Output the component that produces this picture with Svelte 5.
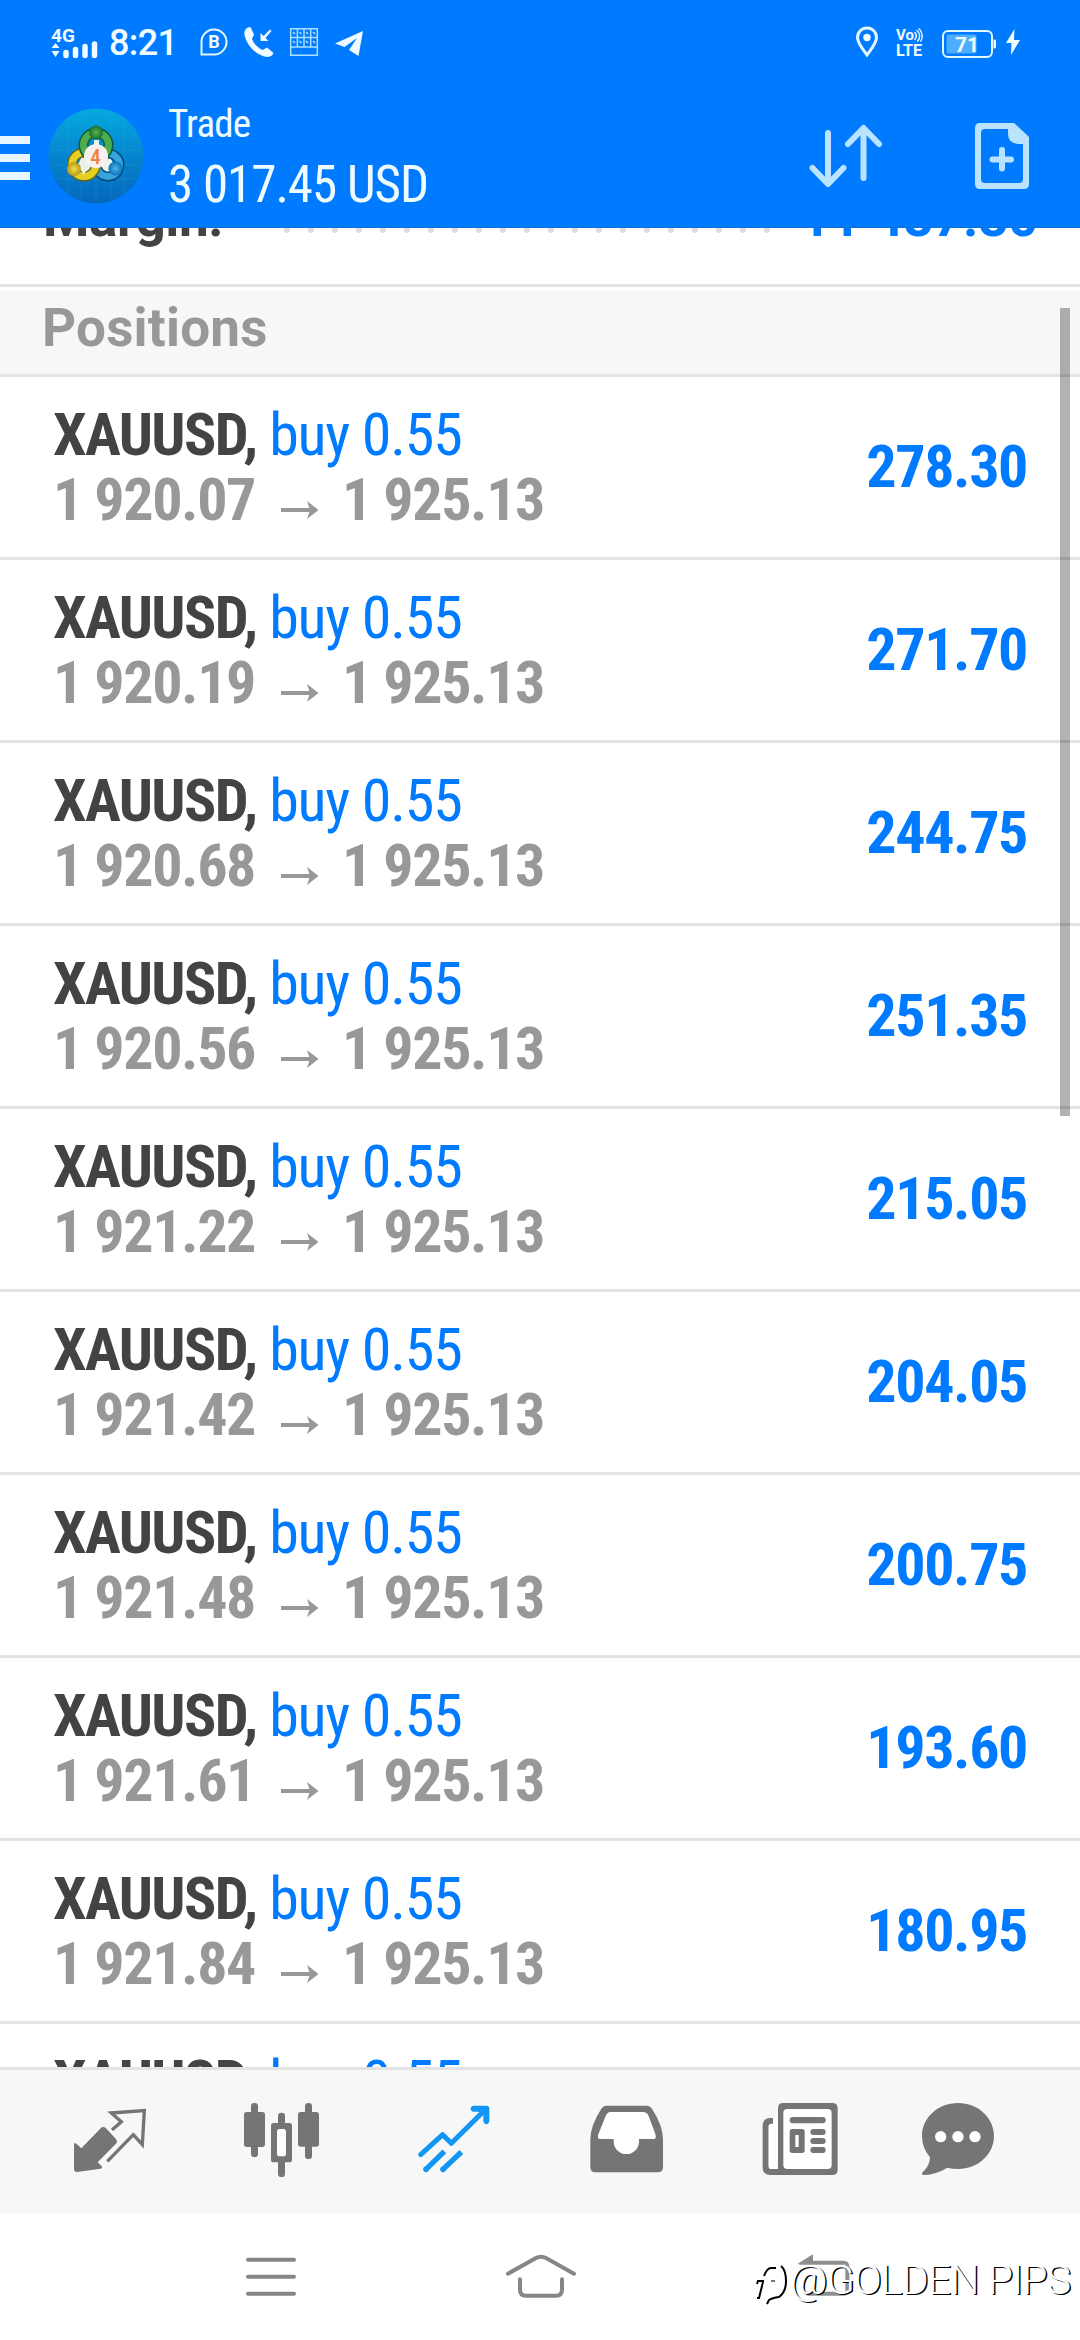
<script lang="ts">
  interface Position {
    symbol: string;
    side: string;
    volume: string;
    open: string;
    current: string;
    profit: string;
  }

  const opened: [string, string][] = [
    ['1 920.07', '278.30'],
    ['1 920.19', '271.70'],
    ['1 920.68', '244.75'],
    ['1 920.56', '251.35'],
    ['1 921.22', '215.05'],
    ['1 921.42', '204.05'],
    ['1 921.48', '200.75'],
    ['1 921.61', '193.60'],
    ['1 921.84', '180.95'],
    ['1 921.90', '177.65'],
  ];

  const positions: Position[] = opened.map(([open, profit]) => ({
    symbol: 'XAUUSD',
    side: 'buy',
    volume: '0.55',
    open,
    current: '1 925.13',
    profit,
  }));

  const dots = Array.from({ length: 21 }, (_, i) => i);
</script>

<div class="screen">
  <header class="top">
    <div class="status">
      <div class="status-left">
        <svg class="signal" viewBox="0 0 48 32">
          <text x="0" y="16" class="net">4G</text>
          <path d="M0.5 22h8L4.500 17zM0.500 25h8L4.500 31z" />
          <path class="bars" d="M15 26.500v3M24.500 23.500v6M34 20.500v9M43.500 18v11.500" />
        </svg>
        <span class="clock">8:21</span>
        <svg class="s-b" viewBox="0 0 28 28">
          <path class="line" d="M1.500 26.500V14A12.500 12.500 0 1 1 14 26.500z" />
          <text x="14" y="19.500" class="bee">B</text>
        </svg>
        <svg class="s-phone" viewBox="0 0 30 30">
          <path d="M4 .5C1 2 0 5 .5 8 3 19 12 28 23 30c3 0 5.500-1.500 6.500-4L23 20.500l-4.500 2.500C13.500 20.500 10 17 8 12l2-4.500L6.500 0z" />
          <path d="M16.500 14V6l3 3L26 2.500l1.500 1.500L21.500 11l3 3z" />
        </svg>
        <svg class="s-grid" viewBox="0 0 28 28">
          <path class="grid" d="M.7.700h26.600v26.600H.700zM.700 9.500h26.600M.700 19h26.600M7.400.700V19M14 .700V19M20.700.700V19" />
          <path class="keys" d="M3 4l2 2M9.500 4l2 2M16 4l2 2M23 4l2 2M3 13l2 2M9.500 13l2 2M16 13l2 2M23 13l2 2" />
        </svg>
        <svg class="s-plane" viewBox="0 0 28 25">
          <path d="M0 12.500 28 0 23.500 25 14 19l8-12-12.500 9z" />
        </svg>
      </div>
      <div class="status-right">
        <svg class="s-pin" viewBox="0 0 22 30">
          <path class="line pinline" d="M11 28C6 21 1.500 16 1.500 10.500a9.500 9.500 0 0 1 19 0C20.500 16 16 21 11 28z" />
          <circle cx="11" cy="10.500" r="3.700" />
        </svg>
        <svg class="s-volte" viewBox="0 0 27 28">
          <text x="0" y="12" class="vo" textLength="18">Vo</text>
          <path class="wave" d="M18.500 4c2.500 2.500 2.500 5 0 8M20.500 2c4 3 4 8 1 11.500M22.500.500c5 4 4 11 2 13" />
          <text x="0" y="28" class="lte" textLength="26">LTE</text>
        </svg>
        <svg class="s-batt" viewBox="0 0 54 28">
          <rect class="line" x="1" y="1" width="49" height="26" rx="5" />
          <rect class="charge" x="4.500" y="4.500" width="30" height="19" rx="2" />
          <path d="M51.500 9.500h1q1.500 0 1.500 2v5q0 2-1.500 2h-1z" />
          <text x="25" y="21.500" class="pct">71</text>
        </svg>
        <svg class="s-bolt" viewBox="0 0 14 26">
          <path d="M8.500 0 0 14h5.500L5 26l9-15H8z" />
        </svg>
      </div>
    </div>

    <div class="appbar">
      <div class="menu"><i></i><i></i><i></i></div>
      <svg class="logo" viewBox="0 0 96 96">
        <defs>
          <linearGradient id="disc" x1="0" y1="0" x2="0" y2="1">
            <stop offset="0" stop-color="#04a9e0" />
            <stop offset=".5" stop-color="#0685cf" />
            <stop offset="1" stop-color="#0567bb" />
          </linearGradient>
          <radialGradient id="green"><stop offset="0" stop-color="#5cb04f" /><stop offset="1" stop-color="#13712f" /></radialGradient>
          <radialGradient id="gold"><stop offset="0" stop-color="#f3dc4f" /><stop offset="1" stop-color="#b79b12" /></radialGradient>
          <radialGradient id="sea"><stop offset="0" stop-color="#4fb4e6" /><stop offset="1" stop-color="#0a72ba" /></radialGradient>
        </defs>
        <circle cx="48" cy="48" r="47.500" fill="url(#disc)" />
        <path class="mesh" d="M20 10v76M33 3v90M48 1v94M63 3v90M76 10v76M8 28h80M3 42h90M3 57h90M8 71h80" />
        <path d="M34 48h28l6 14-8 6H36l-8-7z" fill="#e9f1ea" />
        <circle class="arm edge" cx="60" cy="57" r="11.500" stroke="#07497c" />
        <circle class="arm" cx="60" cy="57" r="11.500" stroke="#35a3de" />
        <circle class="arm edge" cx="36" cy="56.500" r="12" stroke="#5f6a1c" />
        <circle class="arm" cx="36" cy="56.500" r="12" stroke="#e6cf23" />
        <circle class="arm edge" cx="48" cy="37" r="12.500" stroke="#0c5a38" />
        <circle class="arm" cx="48" cy="37" r="12.500" stroke="#4dac4b" />
        <path d="M33 61h7l-5 6zM57 56h8l-3 7zM46 32h5v6h-5z" fill="#e9f1ea" />
        <circle cx="48" cy="24.500" r="7" fill="url(#green)" />
        <circle cx="26" cy="61" r="7" fill="url(#gold)" />
        <circle cx="67.500" cy="60.500" r="7" fill="url(#sea)" />
        <circle cx="48" cy="48" r="12" fill="#f6f1ee" />
        <text x="47.500" y="55.500" class="four">4</text>
      </svg>
      <div class="account">
        <span class="title">Trade</span>
        <span class="balance">3 017.45 USD</span>
      </div>
      <svg class="sort" viewBox="0 0 74 64">
        <path d="M19 9v50M3.500 44 19 60 34.500 44M54.500 54V5M39 20 54.500 4 70 20" />
      </svg>
      <svg class="add" viewBox="0 0 54 66">
        <path class="sheet" fill-rule="evenodd" d="M5 0h34l15 14v47q0 5-5 5H5q-5 0-5-5V5Q0 0 5 0zM10 6q-4 0-4 4v46q0 4 4 4h34q4 0 4-4V21h-5Q33 20 33 11V6z" />
        <path class="plus" d="M17.500 36.500h18.500M27 27v18.500" />
      </svg>
    </div>
  </header>

  <main class="content">
    <div class="summary">
      <span class="label">Margin:</span>
      <span class="dots">{#each dots as dot (dot)}<i></i>{/each}</span>
      <span class="value">11 487.80</span>
    </div>
    <h2 class="section">Positions</h2>
    {#each positions as position}
      <div class="row">
        <div class="info">
          <div class="deal"><b>{position.symbol},</b> <span>{position.side} {position.volume}</span></div>
          <div class="prices">
            <span>{position.open}</span>
            <svg class="arrow" viewBox="0 0 38 18"><path d="M0 9h34" /><path class="head" d="M26 0 37.500 9 26 18 29 9z" /></svg>
            <span>{position.current}</span>
          </div>
        </div>
        <span class="profit">{position.profit}</span>
      </div>
    {/each}
    <div class="scrollbar"></div>
  </main>

  <nav class="tabs">
    <svg viewBox="0 210 540 430">
      <path d="M222 436q0-12 8-4l14 13 58-60q8-8 16 0l29 31q8 8 0 16l-54 55 12 11q4 6-4 8l-69 10q-10 1-10-9z" />
      <path class="t-line" stroke-width="10" d="M336 390l28-25-30-26 99-7-6 102-27-30-78 80" />
    </svg>
    <svg viewBox="540 210 540 430">
      <rect x="732" y="336" width="63" height="105" rx="8" />
      <rect x="753" y="309" width="21" height="162" rx="10" />
      <rect x="894" y="336" width="63" height="104" rx="8" />
      <rect x="915" y="309" width="21" height="168" rx="10" />
      <rect x="834" y="338" width="21" height="40" rx="10" />
      <rect x="834" y="470" width="21" height="61" rx="10" />
      <rect x="813" y="369" width="63" height="118" rx="8" />
      <rect x="831" y="387" width="27" height="82" rx="8" fill="#fff" />
    </svg>
    <svg class="active" viewBox="0 210 540 430">
      <path class="t-line" stroke-width="15" stroke-linecap="round" stroke-linejoin="round" d="M182 464l66-60 26 26 103-102" />
      <path class="t-line" stroke-width="16" d="M253 454l-56 55M304 456l-56 53" />
      <circle cx="198" cy="508" r="8.500" />
      <circle cx="249" cy="508" r="8.500" />
      <path d="M341 317h38q9 0 9 9v38q-2 9-9 9t-9-9v-18l-16-11h-13q-9-1-9-9t9-9z" />
    </svg>
    <svg viewBox="540 210 540 430">
      <path fill-rule="evenodd" d="M739 317h122q9 0 15 9 32 50 33 90v86q0 15-15 15H706q-15 0-15-15v-86q1-40 33-90 6-9 15-9z" />
      <path fill="#fff" d="M751 336h98q12 0 17 12l20 54q4 15-4 15h-45v8a38 37 0 0 1-76 0v-8h-42q-8 0-4-14l22-55q5-12 14-12z" />
    </svg>
    <svg viewBox="0 210 540 430">
      <path fill-rule="evenodd" d="M190 309h147q16 0 16 16v184q0 16-16 16H151q-23 0-23-23V377q0-23 23-23h8v18h-5q-8 0-8 8v119q0 8 8 8h20V325q0-16 16-16z" />
      <path fill="#fff" d="M154 371h5v-17h14v153h-20q-7 0-7-7V379q0-8 8-8z" />
      <rect x="190" y="327" width="145" height="180" rx="12" fill="#fff" />
      <rect x="209" y="351" width="108" height="19" rx="9" />
      <rect x="209" y="387" width="45" height="72" rx="8" />
      <rect x="226" y="405" width="10" height="36" fill="#fff" />
      <rect x="271" y="387" width="46" height="18" rx="9" />
      <rect x="271" y="414" width="46" height="18" rx="9" />
      <rect x="271" y="441" width="46" height="18" rx="9" />
    </svg>
    <svg viewBox="540 210 540 430">
      <path d="M714 309c60 0 108 44 108 99s-48 99-108 99q-18 0-32-4-36 22-74 22-4-3 0-8 22-20 22-45-24-28-24-64c0-55 48-99 108-99z" />
      <g fill="#fff"><circle cx="662" cy="410" r="17" /><circle cx="714" cy="410" r="17" /><circle cx="765" cy="410" r="17" /></g>
    </svg>
  </nav>

  <footer class="system">
    <svg viewBox="0 640 1080 380"><path class="n-line" d="M744 780h138M744 831h138M744 882h138" /></svg>
    <svg viewBox="0 640 1080 380">
      <path class="n-line" d="M444 822l84-47q15-8 30 0l84 47M480 839v31q0 18 18 18h90q18 0 18-18v-31" />
    </svg>
    <svg viewBox="0 640 1080 380">
      <path class="n-fill" d="M233 792l43-27h3v18h91q18 0 18 18v69q0 18-18 18H262v-12h114v-81H240z" />
    </svg>
    <div class="watermark">
      <svg viewBox="0 0 31 40">
        <path class="w-black" d="M0 20l1-3h6M7 12q3-8 7-8h5M6 18q-2 8-4 16h-2M24 2q5 4 5 15t-7 16q-7 1-10 3l-2 4" />
        <path class="w-grey" d="M14 17h4" />
      </svg>
      <span>@GOLDEN PIPS</span>
    </div>
  </footer>
</div>

<style>
  :global(body) {
    margin: 0;
    background: #ffffff;
  }

  .screen {
    width: 1080px;
    height: 2340px;
    display: flex;
    flex-direction: column;
    overflow: hidden;
    background: #ffffff;
    font-family: 'Roboto Condensed', Roboto, sans-serif;
    font-stretch: 75%;
  }

  svg {
    display: block;
    flex: none;
    overflow: visible;
  }

  .top {
    flex: none;
    height: 228px;
    box-sizing: border-box;
    border-bottom: 1px solid #0a6fd6;
    background: #007bff;
    position: relative;
    z-index: 1;
  }

  .status {
    height: 84px;
    display: flex;
    justify-content: space-between;
    padding: 0 60px 0 51px;
    font-family: Roboto, sans-serif;
    font-stretch: 100%;
  }

  .status-left,
  .status-right {
    display: flex;
    align-items: center;
    color: #f0fbff;
  }

  .status svg {
    fill: #f0fbff;
  }

  .status .line {
    fill: none;
    stroke: #e4f8ff;
    stroke-width: 2;
  }

  .status .pinline {
    stroke-width: 3;
  }

  .signal {
    width: 48px;
    height: 32px;
  }

  .net {
    font-size: 19px;
    font-weight: 700;
  }

  .bars {
    stroke: #f0fbff;
    stroke-width: 5.5;
    stroke-linecap: round;
  }

  .clock {
    width: 67px;
    margin: 2px 13px 0 10px;
    font-size: 36px;
    font-weight: 500;
    letter-spacing: -0.6px;
    line-height: 40px;
  }

  .s-b {
    width: 28px;
    height: 28px;
    margin-left: 11px;
  }

  .bee {
    font-size: 18px;
    font-weight: 700;
    text-anchor: middle;
  }

  .s-phone {
    width: 30px;
    height: 30px;
    margin-left: 16px;
  }

  .s-grid {
    width: 28px;
    height: 28px;
    margin-left: 16px;
  }

  .grid {
    fill: none;
    stroke: #a9e0ff;
    stroke-width: 1.5;
  }

  .keys {
    stroke: #b5e2ff;
    stroke-width: 1.5;
  }

  .s-plane {
    width: 28px;
    height: 25px;
    margin: 2px 0 0 17px;
  }

  .s-pin {
    width: 22px;
    height: 30px;
  }

  .s-volte {
    width: 27px;
    height: 28px;
    margin-left: 18px;
  }

  .vo {
    font-size: 15px;
    font-weight: 700;
  }

  .lte {
    font-size: 16px;
    font-weight: 700;
  }

  .wave {
    fill: none;
    stroke: #f0fbff;
    stroke-width: 1.4;
  }

  .s-batt {
    width: 54px;
    height: 28px;
    margin: 3px 0 0 19px;
  }

  .status .charge {
    fill: #4dadff;
  }

  .pct {
    font-size: 21px;
    font-weight: 700;
    text-anchor: middle;
  }

  .s-bolt {
    width: 14px;
    height: 26px;
    margin-left: 10px;
  }

  .appbar {
    height: 143px;
    display: flex;
    align-items: flex-start;
  }

  .menu {
    width: 30px;
    margin-top: 52px;
    display: flex;
    flex-direction: column;
    gap: 10px;
  }

  .menu i {
    height: 8px;
    background: #e8f7ff;
  }

  .logo {
    width: 96px;
    height: 96px;
    margin: 24px 0 0 18px;
  }

  .mesh {
    stroke: #35b4ea;
    stroke-width: 0.6;
    opacity: 0.35;
  }

  .arm {
    fill: none;
    stroke-width: 7;
  }

  .edge {
    stroke-width: 10;
  }

  .four {
    fill: #f0813f;
    font-size: 21px;
    font-weight: 500;
    text-anchor: middle;
  }

  .account {
    flex: 1;
    padding: 17px 0 0 24px;
    display: flex;
    flex-direction: column;
    color: #eefbff;
    white-space: nowrap;
  }

  .title {
    font-size: 39px;
    letter-spacing: -0.8px;
    line-height: 46px;
  }

  .balance {
    margin-top: 8px;
    font-size: 51px;
    letter-spacing: -1px;
    line-height: 60px;
  }

  .sort {
    width: 74px;
    height: 64px;
    margin-top: 40px;
    fill: none;
    stroke: #b9e3ff;
    stroke-width: 6;
    stroke-linecap: round;
    stroke-linejoin: round;
  }

  .add {
    width: 54px;
    height: 66px;
    margin: 39px 51px 0 92px;
  }

  .sheet {
    fill: #b9e3ff;
  }

  .plus {
    stroke: #b9e3ff;
    stroke-width: 6;
    stroke-linecap: round;
  }

  .content {
    flex: none;
    height: 1839px;
    position: relative;
    overflow: hidden;
  }

  .summary {
    height: 97px;
    margin-top: -41px;
    padding: 0 42px 0 43px;
    border-bottom: 3px solid #e3e3e3;
    display: flex;
    align-items: flex-start;
    font-family: Roboto, sans-serif;
    font-stretch: 100%;
    font-size: 53px;
    font-weight: 700;
    letter-spacing: -0.4px;
    line-height: 62px;
  }

  .label {
    width: 241px;
    color: #434343;
  }

  .dots {
    display: flex;
    gap: 18px;
    margin-top: 40px;
  }

  .dots i {
    width: 6px;
    height: 6px;
    border-radius: 3px;
    background: #dcdce0;
  }

  .value {
    margin-left: auto;
    color: #007bff;
  }

  .section {
    height: 84px;
    margin: 3px 0 0;
    padding-left: 42px;
    border-bottom: 3px solid #e3e3e3;
    background: #f7f7f7;
    color: #98989b;
    font-family: Roboto, sans-serif;
    font-stretch: 100%;
    font-size: 53px;
    font-weight: 700;
    letter-spacing: 0.2px;
    line-height: 77px;
  }

  .row {
    height: 180px;
    padding: 0 53px;
    border-bottom: 3px solid #e3e3e3;
    display: flex;
    align-items: center;
    justify-content: space-between;
  }

  .info {
    white-space: nowrap;
    font-size: 60px;
    letter-spacing: -1.2px;
  }

  .deal {
    line-height: 65px;
    color: #007bff;
  }

  .deal b {
    color: #434343;
    letter-spacing: -1.6px;
  }

  .prices {
    display: flex;
    align-items: center;
    color: #98989b;
    font-weight: 700;
    letter-spacing: -1.4px;
    line-height: 65px;
  }

  .arrow {
    width: 38px;
    height: 18px;
    margin: 20px 23px 0 26px;
    fill: #98989b;
    stroke: #98989b;
    stroke-width: 4;
  }

  .arrow .head {
    stroke: none;
  }

  .profit {
    color: #007bff;
    font-size: 60px;
    font-weight: 700;
    letter-spacing: -1.4px;
    line-height: 60px;
  }

  .scrollbar {
    position: absolute;
    top: 80px;
    right: 10px;
    width: 10px;
    height: 808px;
    background: rgba(0, 0, 0, 0.3);
  }

  .tabs {
    flex: none;
    height: 143.333px;
    border-top: 3px solid #e3e3e3;
    display: flex;
    background: #f7f7f7;
  }

  .tabs svg {
    width: 180px;
    height: 143.333px;
    fill: #757575;
    color: #757575;
  }

  .tabs .active {
    fill: #1296f3;
    color: #1296f3;
  }

  .t-line {
    fill: none;
    stroke: currentColor;
  }

  .system {
    flex: none;
    height: 126.667px;
    display: flex;
    position: relative;
  }

  .system > svg {
    width: 360px;
    height: 126.667px;
  }

  .n-line {
    fill: none;
    stroke: #868686;
    stroke-width: 12;
    stroke-linecap: round;
  }

  .n-fill {
    fill: #8e8e8e;
  }

  .watermark {
    position: absolute;
    top: 47px;
    left: 757px;
    display: flex;
    gap: 2px;
    font-family: Roboto, sans-serif;
    font-stretch: 100%;
    font-size: 41px;
    font-weight: 300;
    letter-spacing: -0.8px;
    line-height: 40px;
    color: #ffffff;
    text-shadow: 1.5px 1px 0 #000000;
    white-space: nowrap;
  }

  .watermark svg {
    width: 31px;
    height: 40px;
    margin-top: 4px;
    fill: none;
    stroke-width: 2;
  }

  .w-black {
    stroke: #000000;
  }

  .w-grey {
    stroke: #777777;
  }
</style>
